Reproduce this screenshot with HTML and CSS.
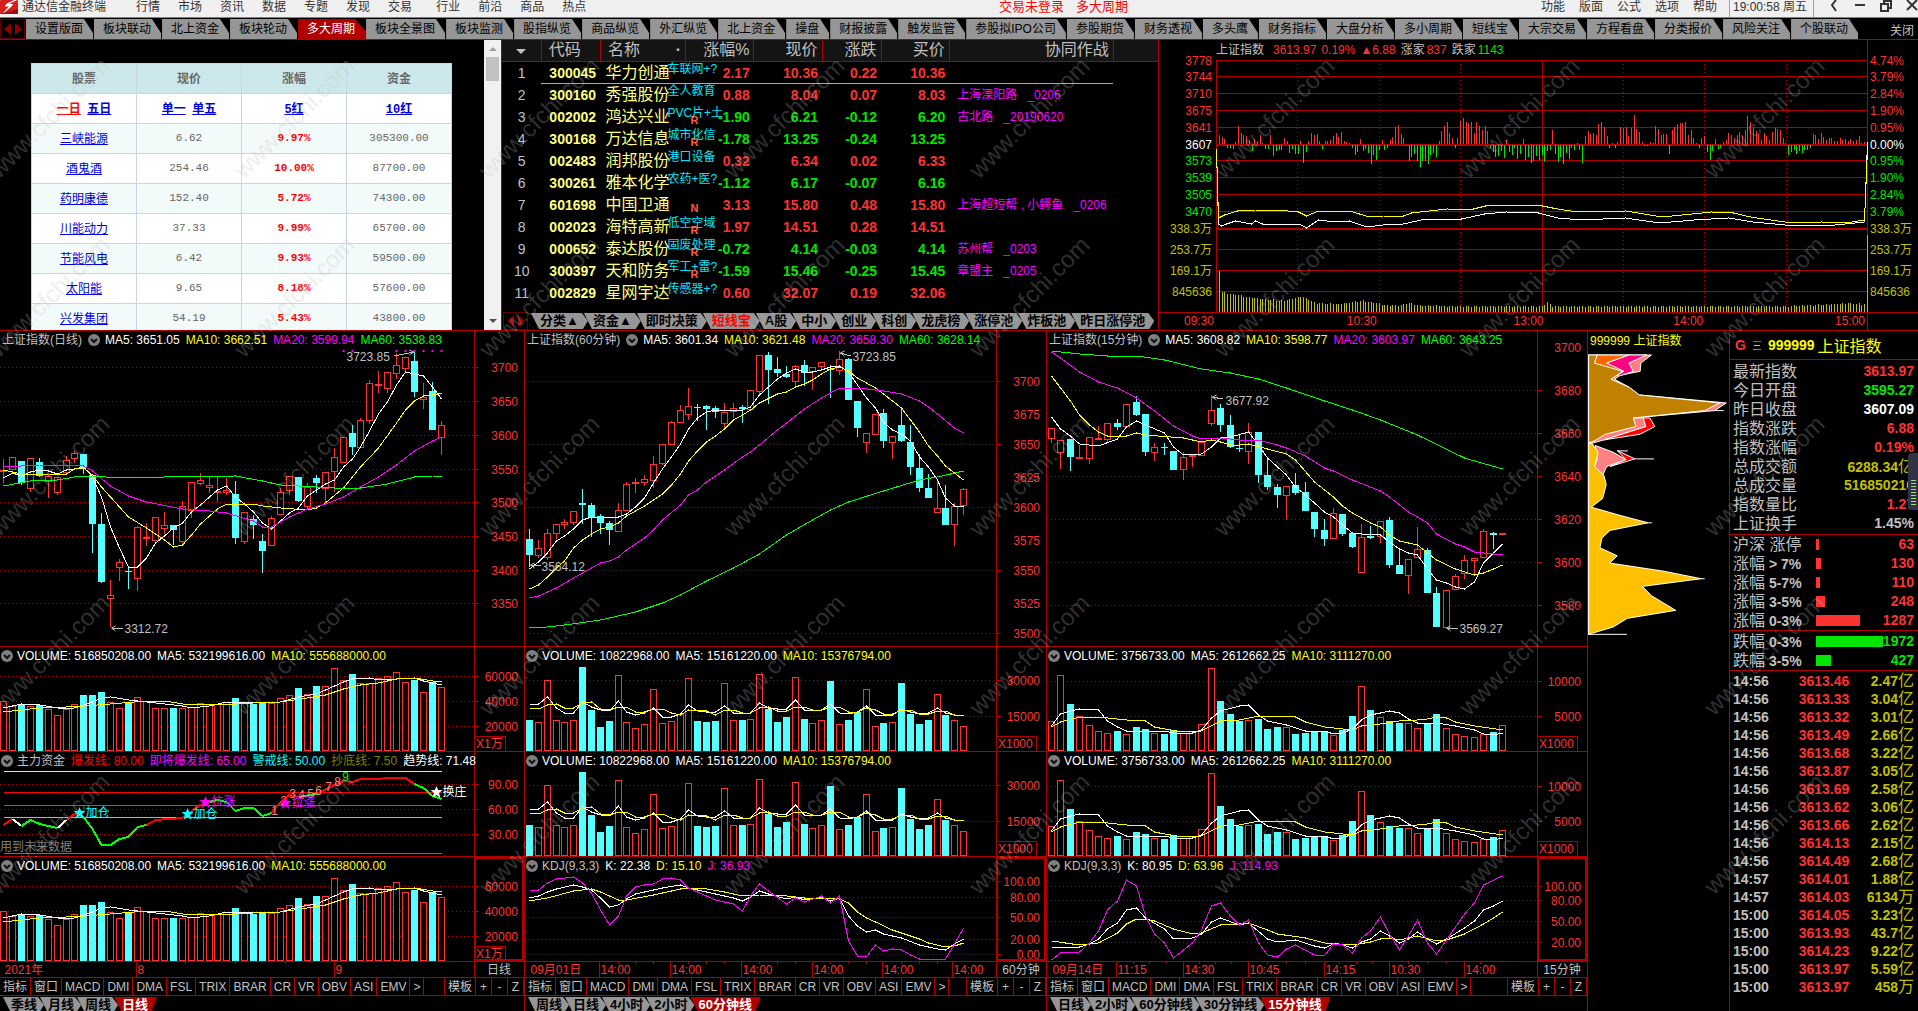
FILE: index.html
```html
<!DOCTYPE html>
<html lang="zh-CN">
<head>
    <meta charset="utf-8">
    <title>通达信金融终端</title>
    <link rel="stylesheet" href="styles.css">
</head>
<body>

<header class="menubar">
    <svg class="logo" viewBox="0 0 18 14"><rect width="18" height="14" rx="1" fill="#d81e1e"/><path d="M14 0L6 4 5 7 9 6 4 12 3 14 12 6 13 4 9 4 17 0Z" fill="#fff"/><path d="M0 14L18 9V14Z" fill="#a00c0c"/></svg>
    <span class="app-name">通达信金融终端</span>
    <nav class="menu" id="menu"></nav>
    <div class="status"><span>交易未登录</span><span>多大周期</span></div>
    <nav class="menu menu-right" id="menuRight"></nav>
    <time class="clock">19:00:58 周五</time>
    <div class="window-buttons">
        <button aria-label="返回"><svg viewBox="0 0 12 12"><path d="M8 0L4 5 8 11"/></svg></button>
        <button aria-label="最小化"><svg viewBox="0 0 12 12"><path d="M1 5H11"/></svg></button>
        <button aria-label="还原"><svg viewBox="0 0 12 12"><path d="M1 4H8V11H1ZM4 4V1H11V8H8"/></svg></button>
        <button aria-label="关闭窗口"><svg viewBox="0 0 12 12"><path d="M1 0L11 10M11 0L1 10"/></svg></button>
    </div>
</header>

<nav class="page-tabs">
    <span class="arrows"><i class="arrow-left"></i><i class="arrow-right"></i></span>
    <div class="tab-list" id="pageTabs"></div>
    <button class="close">关闭</button>
</nav>

<main>
    <div class="top">
        <section class="funds">
            <div class="funds-page">
                <table class="funds-table">
                    <thead><tr><th>股票</th><th>现价</th><th>涨幅</th><th>资金</th></tr></thead>
                    <tbody id="fundsBody">
                        <tr class="links">
                            <td><a href="#" class="current">一日</a> <a href="#">五日</a></td>
                            <td><a href="#">单一</a> <a href="#">单五</a></td>
                            <td><a href="#">5红</a></td>
                            <td><a href="#">10红</a></td>
                        </tr>
                    </tbody>
                </table>
            </div>
            <div class="scrollbar"><i class="up"></i><i class="thumb"></i><i class="down"></i></div>
        </section>

        <section class="stocks">
            <table class="stock-table">
                <colgroup><col class="c-no"><col class="c-code"><col class="c-name"><col class="c-num"><col class="c-num"><col class="c-diff"><col class="c-num"><col class="c-note"><col></colgroup>
                <thead>
                    <tr><th class="no"><i class="down"></i></th><th>代码</th><th>名称<b>·</b></th><th class="num">涨幅%</th><th class="num">现价</th><th class="num">涨跌</th><th class="num">买价</th><th class="num">协同作战</th><th></th></tr>
                </thead>
                <tbody id="stockBody"></tbody>
            </table>
            <nav class="sheet-tabs stock-tabs">
                <span class="arrows"><i class="arrow-left"></i><i class="arrow-right"></i></span>
                <div class="tab-list" id="stockTabs"></div>
            </nav>
        </section>

        <section class="intraday">
            <svg id="intraday"></svg>
            <div class="readout">
                <span class="gray title">上证指数</span><span class="red">3613.97</span><span class="red">0.19%</span><span class="red">▲6.88</span>
                <span class="gray">涨家<em class="red">837</em></span><span class="gray">跌家<em class="green">1143</em></span>
            </div>
        </section>
    </div>

    <div class="bottom">
        <section class="column" id="day"></section>
        <section class="column" id="min60"></section>
        <section class="column" id="min15"></section>

        <section class="profile">
            <h2>999999 上证指数</h2>
            <svg viewBox="0 0 424 850" preserveAspectRatio="none">
                <g stroke="#fff" stroke-width="3" stroke-linejoin="round" transform="translate(-24 -70)">
                    <path fill="#ff8080" d="M24 73H215L183 97 181 122 120 134 104 146 148 170 178 193 440 217 405 240 160 262H190L198 288 72 328 36 338H24Z"/>
                    <path fill="#ff0080" d="M146 73H200L147 97 160 122 118 136 80 97Z"/>
                    <path fill="#f60" d="M50 73H146L80 97 132 122 110 134 43 97Z"/>
                    <path fill="#f00" d="M190 262H210L225 288 180 311 72 328 198 288Z"/>
                    <path fill="#c08000" d="M24 73H52L43 97 128 122 93 146 148 170 178 193 420 217 375 240 160 262 168 288 76 311 45 330 24 338Z"/>
                    <path fill="#ff8080" d="M46 345L100 365 138 387 80 408 68 435 44 408 52 385Z"/>
                    <path fill="#f00" d="M112 360L165 385 90 408 138 387Z"/>
                    <path fill="#ffc000" d="M24 338H36L54 365 50 385 44 408 72 435 79 462 68 504 34 530 118 554 205 577 90 600 66 623 60 652 112 676 90 698 250 722 365 745 188 768 215 796 288 840 142 864 100 890 26 912H24Z"/>
                    <path fill="none" d="M405 240H432M165 385H222M112 361H144M205 577H216M365 745H375M24 912H141M26 73V912"/>
                </g>
            </svg>
        </section>

        <section class="quote">
            <h2><b class="red">G</b><svg viewBox="0 0 8 11"><path d="M0 1H8" stroke="#ff3232"/><path d="M1 5H7" stroke="#c0c0c0"/><path d="M0 9H8" stroke="#00e600"/></svg><b>999999</b><span>上证指数</span></h2>
            <table class="facts" id="facts"></table>
            <table class="spread" id="spreadUp"></table>
            <table class="spread" id="spreadDown"></table>
            <table class="ticks" id="ticks"></table>
            <div class="meter"></div>
        </section>
    </div>
</main>

<div class="watermarks" id="watermarks" aria-hidden="true"></div>

<script src="data.js"></script>
<script src="app.js"></script>
</body>
</html>
```
FILE: styles.css
```css
* {
    box-sizing: border-box;
}

body {
    margin: 0;
    min-height: 100vh;
    background: #000;
    color: #c0c0c0;
    font-family: "Liberation Sans", "Noto Sans CJK SC", sans-serif;
    font-size: 12px;
    overflow: hidden;
}

button {
    border: 0;
    padding: 0;
    background: none;
    color: inherit;
    font: inherit;
    cursor: pointer;
}

a {
    color: inherit;
    text-decoration: none;
}

i, em {
    font-style: normal;
}

h2 {
    margin: 0;
    font-weight: normal;
}

table {
    border-collapse: collapse;
    width: 100%;
}

td, th {
    padding: 0;
    white-space: nowrap;
}

th {
    font-weight: normal;
}

.red { color: #ff3232; }
.green { color: #00e600; }
.gray { color: #c0c0c0; }
.white { color: #fff; }
.yellow { color: #ffff00; }
.magenta { color: #ff00ff; }
.lime { color: #00ff00; }
.cyan { color: #00ffff; }
.fire { color: #ff0000; }
.olive { color: #808000; }
.gold { color: #c0c000; }

/* menu bar */
.menubar {
    display: flex;
    height: 18px;
    overflow: hidden;
    background: #f0f0f0;
    border-bottom: 1px solid #808080;
    color: #333;
    line-height: 14px;
    white-space: nowrap;
}

.logo {
    width: 18px;
    height: 14px;
    flex: none;
}

.app-name {
    margin: 0 30px 0 4px;
}

.menu {
    display: flex;
    gap: 18px;
}

.menu .spaced {
    margin-left: 6px;
}

.status {
    display: flex;
    gap: 12px;
    margin: 0 auto;
    color: #ff0000;
    font-size: 13px;
}

.menu-right {
    gap: 14px;
    margin-right: 12px;
}

.clock {
    width: 85px;
    padding-left: 3px;
    border-left: 1px solid #a0a0a0;
    border-right: 1px solid #a0a0a0;
}

.window-buttons {
    display: flex;
    align-items: flex-start;
    gap: 14px;
    margin-left: 14px;
}

.window-buttons svg {
    display: block;
    width: 12px;
    height: 12px;
    fill: none;
    stroke: #333;
    stroke-width: 2;
}

/* page tabs */
.page-tabs {
    display: flex;
    height: 22px;
    padding-top: 1px;
    border-bottom: 1px solid #b00000;
    background: #000;
    white-space: nowrap;
}

.tab-list {
    display: flex;
}

.arrows {
    display: flex;
    align-items: center;
    justify-content: center;
    gap: 4px;
    width: 25px;
    margin-right: 1px;
    border: 1px solid #600000;
}

.arrow-left, .arrow-right {
    border: 6px solid transparent;
}

.arrow-left {
    border-left: 0;
    border-right: 7px solid #900000;
}

.arrow-right {
    border-right: 0;
    border-left: 7px solid #900000;
}

.page-tabs .tab-list button {
    height: 20px;
    margin-right: 1px;
    padding: 0 10px 0 9px;
    background: #969696;
    color: #000;
    line-height: 19px;
    clip-path: polygon(0 0, calc(100% - 9px) 0, 100% 70%, 100% 100%, 0 100%);
}

.page-tabs .tab-list .active {
    margin-right: -7px;
    padding-right: 18px;
    background: #b00000;
    color: #fff;
    clip-path: polygon(0 0, calc(100% - 18px) 0, 100% 100%, 0 100%);
}

.close {
    margin-left: auto;
    padding-right: 4px;
}

/* upper row */
.top {
    display: grid;
    grid-template-columns: minmax(0, 501fr) minmax(0, 657fr) minmax(0, 760fr);
    height: 290px;
}

.funds {
    display: flex;
    height: 290px;
    overflow: hidden;
}

.funds-page {
    flex: 1;
    padding: 23px 32px 0 31px;
}

.funds-table {
    table-layout: fixed;
    background: #fff;
    color: #666;
    font-family: "Liberation Mono", "Noto Sans CJK SC", monospace;
    font-size: 11px;
    text-align: center;
}

.funds-table th, .funds-table td {
    height: 30px;
    padding-bottom: 2px;
    border: 1px solid #c5d6e8;
}

.funds-table th {
    background: #cde8ea;
    font-weight: bold;
    font-size: 12px;
}

.funds-table tr:nth-child(even) td {
    background: #f3fafa;
}

.funds-table a {
    color: #0000e0;
    font-size: 12px;
    text-decoration: underline;
}

.funds-table .links a {
    font-weight: bold;
}

.funds-table .links .current,
.funds-table .rise {
    color: #ff0000;
    font-weight: bold;
}

.scrollbar {
    display: flex;
    flex-direction: column;
    align-items: center;
    width: 17px;
    padding: 7px 0;
    background: #f1f1f1;
}

.scrollbar .up {
    border: 4px solid transparent;
    border-top: 0;
    border-bottom: 4px solid #a0a0a0;
}

.thumb {
    width: 13px;
    height: 24px;
    margin-top: 6px;
    background: #c1c1c1;
}

.down {
    display: inline-block;
    border: 5px solid transparent;
    border-bottom: 0;
    border-top: 5px solid #c0c0c0;
}

.no .down {
    vertical-align: middle;
}

.scrollbar .down {
    margin-top: auto;
    border-width: 4px 4px 0;
    border-top-color: #505050;
}

/* stock list */
.stocks {
    display: flex;
    flex-direction: column;
    border-left: 1px solid #b00000;
}

.stock-table {
    table-layout: fixed;
    font-size: 14px;
    font-weight: bold;
}

.c-no { width: 6%; }
.c-code { width: 9%; }
.c-name { width: 13%; }
.c-num { width: 10.4%; }
.c-diff { width: 9%; }
.c-note { width: 25%; }

.stock-table th {
    height: 21px;
    padding: 0 4px 0 7px;
    border-right: 1px solid #b00000;
    border-bottom: 1px solid #b00000;
    background: #141414;
    font-size: 16px;
    line-height: 18px;
    text-align: left;
}

.stock-table th:last-child {
    border-right: 0;
}

.stock-table th b {
    float: right;
}

.stock-table td {
    height: 22px;
    padding: 0 4px 0 8px;
    line-height: 22px;
    color: #ffff80;
}

.stock-table .no {
    padding: 0;
    color: #c0c0c0;
    font-weight: normal;
    text-align: center;
}

.stock-table .num {
    text-align: right;
    padding-left: 0;
}

.stock-table td.red { color: #ff3232; }
.stock-table td.green { color: #00e600; }

.stock-table .name {
    position: relative;
    padding-left: 5px;
    font-size: 16px;
    font-weight: normal;
}

.tag {
    position: absolute;
    left: 67px;
    top: 0;
    z-index: 1;
    color: #00e6ff;
    font-size: 12px;
    line-height: 14px;
}

.mark {
    position: absolute;
    left: 90px;
    bottom: 2px;
    color: #ff5a46;
    font-size: 11px;
    font-weight: bold;
    line-height: 12px;
}

.stock-table .note {
    color: #ff00ff;
    font-size: 12px;
    font-weight: normal;
    white-space: pre;
}

.stock-table .picked td:not(:first-child):not(:last-child) {
    box-shadow: inset 0 -1px #c0c000;
}

.sheet-tabs {
    display: flex;
    height: 15px;
    padding: 1px 0 0 3px;
    overflow: hidden;
    white-space: nowrap;
}

.sheet-tabs .tab-list button {
    height: 16px;
    margin-right: -4px;
    padding: 0 7px 0 8px;
    background: #969696;
    color: #000;
    font-size: 13px;
    font-weight: bold;
    line-height: 16px;
    clip-path: polygon(0 0, calc(100% - 6px) 0, 100% 50%, calc(100% - 5px) 100%, 8px 100%);
}

.sheet-tabs .tab-list .active {
    padding-right: 9px;
    background: #b00000;
    color: #fff;
    clip-path: polygon(0 0, 100% 0, calc(100% - 6px) 100%, 8px 100%);
}

.stock-tabs {
    height: 18px;
    margin-top: auto;
    padding: 0 0 0 1px;
}

.stock-tabs .arrows {
    margin-right: 3px;
}

.stock-tabs .tab-list button {
    margin-top: 1px;
    padding: 0 9px;
}

.stock-tabs .tab-list .active {
    background: #969696;
    color: #ff0000;
    clip-path: polygon(0 0, calc(100% - 6px) 0, 100% 50%, calc(100% - 5px) 100%, 8px 100%);
}

/* drawings with a readout on top */
.intraday, .panel {
    display: grid;
}

.intraday > *, .panel > * {
    grid-area: 1 / 1;
    min-width: 0;
}

.intraday svg, .panel svg.plot {
    display: block;
    width: 100%;
    height: 100%;
}

.intraday {
    border-left: 1px solid #b00000;
}

.readout {
    display: flex;
    align-self: start;
    gap: 6px;
    height: 18px;
    padding-left: 2px;
    line-height: 18px;
    white-space: nowrap;
    align-items: center;
    z-index: 1;
}

.intraday .readout {
    padding: 2px 0 0 57px;
    gap: 5px;
}

.readout .title {
    margin-right: 4px;
}

.readout em {
    margin-left: 2px;
}

.toggle {
    width: 12px;
    height: 12px;
    flex: none;
    margin-right: -1px;
    border-radius: 50%;
    background: #808080;
}

.toggle svg {
    display: block;
    width: 12px;
    height: 12px;
    fill: none;
    stroke: #111;
    stroke-width: 2;
}

.toggle:first-child {
    margin: 0 -2px 0 -1px;
}

svg text {
    font-family: "Liberation Sans", "Noto Sans CJK SC", sans-serif;
    font-size: 12px;
}

/* lower row */
.bottom {
    display: grid;
    grid-template-columns: minmax(0, 524fr) minmax(0, 522fr) minmax(0, 541fr) minmax(0, 142fr) minmax(0, 189fr);
    border-top: 1px solid #b00000;
}

.bottom > section + section {
    border-left: 1px solid #b00000;
}

.panel {
    border-bottom: 1px solid #b00000;
    height: 105px;
}

.panel.price {
    height: 316px;
}

.panel.times {
    height: 16px;
}

.indicators {
    display: flex;
    height: 18px;
    border-bottom: 1px solid #b00000;
}

.indicators button {
    padding: 0 3px;
    border-right: 1px solid #b00000;
    line-height: 16px;
}

.indicators .rest {
    flex: 1;
    border-right: 1px solid #b00000;
}

.indicators .key {
    width: 16px;
}

/* volume profile */
.profile h2 {
    padding-left: 2px;
    color: #ffff00;
    font-size: 12px;
    line-height: 20px;
    height: 23px;
    white-space: nowrap;
}

.profile svg {
    display: block;
    width: 100%;
    height: 283px;
    shape-rendering: crispEdges;
}

/* quote column */
.quote {
    position: relative;
    font-size: 14px;
    font-weight: bold;
}

.quote h2 {
    display: flex;
    align-items: center;
    gap: 7px;
    height: 28px;
    padding-left: 5px;
    color: #ffff00;
    font-size: 14px;
    white-space: nowrap;
}

.quote h2 svg {
    width: 8px;
    height: 11px;
    stroke-width: 1;
    shape-rendering: crispEdges;
}

.quote h2 span {
    margin-left: -4px;
    font-size: 16px;
}

.quote table {
    border-top: 1px solid #b00000;
    border-collapse: separate;
    border-spacing: 0;
}

.quote td {
    height: 19px;
    padding: 0 4px 0 0;
    line-height: 17px;
    text-align: right;
}

.quote td:first-child {
    padding-left: 3px;
    text-align: left;
}

.quote em {
    font-size: 16px;
    font-weight: normal;
}

.quote .facts {
    padding: 2px 0 1px;
}

.spread td:first-child {
    width: 86px;
}

.quote .spread .bar {
    padding: 0;
    width: 44px;
    text-align: left;
}

.bar i {
    display: block;
    height: 11px;
    background: #ff3232;
}

#spreadDown .bar i {
    background: #00e600;
}

.quote #spreadDown, .quote .ticks {
    padding-top: 1px;
}

.quote .ticks td {
    height: 18px;
    line-height: 17px;
}

.meter {
    position: absolute;
    right: 0;
    top: 122px;
    width: 10px;
    height: 57px;
    border-radius: 4px 0 0 4px;
    background: repeating-linear-gradient(#96e678 0 1px, transparent 1px 3px) 3px 27px / 5px 26px no-repeat, #303446;
}

/* page watermark */
.watermarks {
    position: absolute;
    inset: 28px 0 0 -73px;
    display: grid;
    grid-template-columns: repeat(8, 245px);
    grid-auto-rows: 179px;
    overflow: hidden;
    pointer-events: none;
}

.watermarks span {
    place-self: center;
    color: rgba(190, 190, 190, 0.27);
    font-size: 24px;
    transform: rotate(-45deg);
}
```
FILE: data.js
```js
const menu = ['行情', '市场', '资讯', '数据', '专题', '发现', '交易', '行业', '前沿', '商品', '热点'];
const menuRight = ['功能', '版面', '公式', '选项', '帮助'];
const pageTabs = ['设置版面', '板块联动', '北上资金', '板块轮动', '多大周期', '板块全景图', '板块监测', '股指纵览', '商品纵览', '外汇纵览', '北上资金', '操盘', '财报披露', '触发监管', '参股拟IPO公司', '参股期货', '财务透视', '多头鹰', '财务指标', '大盘分析', '多小周期', '短线宝', '大宗交易', '方程看盘', '分类报价', '风险关注', '个股联动'];
const stockTabs = ['分类▲', '资金▲', '即时决策', '短线宝', 'A股', '中小', '创业', '科创', '龙虎榜', '涨停池', '炸板池', '昨日涨停池'];

const funds = [
    ['三峡能源', '6.62', '9.97%', '305300.00'],
    ['酒鬼酒', '254.46', '10.00%', '87700.00'],
    ['药明康德', '152.40', '5.72%', '74300.00'],
    ['川能动力', '37.33', '9.99%', '65700.00'],
    ['节能风电', '6.42', '9.93%', '59500.00'],
    ['太阳能', '9.65', '8.18%', '57600.00'],
    ['兴发集团', '54.19', '5.43%', '43800.00']
];

// code, name, theme, mark, change %, price, change, bid, note
const stocks = [
    ['300045', '华力创通', '车联网+?', '', '2.17', '10.36', '0.22', '10.36', ''],
    ['300160', '秀强股份', '全人教育', '', '0.88', '8.04', '0.07', '8.03', '上海溧阳路   _0206'],
    ['002002', '鸿达兴业', 'PVC片+土', 'R', '-1.90', '6.21', '-0.12', '6.20', '古北路   _20190620'],
    ['300168', '万达信息', '城市化信', 'R', '-1.78', '13.25', '-0.24', '13.25', ''],
    ['002483', '润邦股份', '港口设备', '', '0.32', '6.34', '0.02', '6.33', ''],
    ['300261', '雅本化学', '农药+医?', '', '-1.12', '6.17', '-0.07', '6.16', ''],
    ['601698', '中国卫通', '', 'N', '3.13', '15.80', '0.48', '15.80', '上海超短帮 , 小鳄鱼   _0206'],
    ['002023', '海特高新', '低空空域', 'R', '1.97', '14.51', '0.28', '14.51', ''],
    ['000652', '泰达股份', '固废处理', 'R', '-0.72', '4.14', '-0.03', '4.14', '苏州帮   _0203'],
    ['300397', '天和防务', '军工+雷?', 'R', '-1.59', '15.46', '-0.25', '15.45', '章盟主   _0205'],
    ['002829', '星网宇达', '传感器+?', '', '0.60', '32.07', '0.19', '32.06', '']
];

const facts = [
    ['最新指数', '3613.97', 'red'], ['今日开盘', '3595.27', 'green'], ['昨日收盘', '3607.09', 'white'],
    ['指数涨跌', '6.88', 'red'], ['指数涨幅', '0.19%', 'red'], ['总成交额', '6288.34<em>亿</em>', 'gold'],
    ['总成交量', '516850210', 'gold'], ['指数量比', '1.27', 'red'], ['上证换手', '1.45%', 'gray']
];
const spreadUp = [['<em>沪深 涨停</em>', 3, '63'], ['<em>涨幅</em> > 7%', 5, '130'], ['<em>涨幅</em> 5-7%', 4, '110'], ['<em>涨幅</em> 3-5%', 9, '248'], ['<em>涨幅</em> 0-3%', 44, '1287']];
const spreadDown = [['<em>跌幅</em> 0-3%', 67, '1972'], ['<em>跌幅</em> 3-5%', 15, '427']];
const ticks = [
    ['14:56', '3613.46', '2.47亿'], ['14:56', '3613.33', '3.04亿'], ['14:56', '3613.32', '3.01亿'],
    ['14:56', '3613.49', '2.66亿'], ['14:56', '3613.68', '3.22亿'], ['14:56', '3613.87', '3.05亿'],
    ['14:56', '3613.69', '2.58亿'], ['14:56', '3613.62', '3.06亿'], ['14:56', '3613.66', '2.62亿'],
    ['14:56', '3614.13', '2.15亿'], ['14:56', '3614.49', '2.68亿'], ['14:57', '3614.01', '1.88亿'],
    ['14:57', '3614.03', '6134万'], ['15:00', '3614.05', '3.23亿'], ['15:00', '3613.93', '43.7亿'],
    ['15:00', '3614.23', '9.22亿'], ['15:00', '3613.97', '5.59亿'], ['15:00', '3613.97', '458万']
];

// Chart heights are kept in thirds of a pixel, counted down from the top of the pane group.
// candle: u/d, high, body top, body bottom, low     line: bar index:height
const columns = [
    {
        id: 'day', name: '上证指数(日线)', period: '日线', plot: 474, start: 3, step: 8.937,
        ma: ['3651.05', '3662.51', '3599.94', '3538.83'],
        grid: { 3700: 112, 3650: 214, 3600: 316, 3550: 416, 3500: 517, 3450: 619, 3400: 721, 3350: 820 },
        candles: 'u388,421,427,460 u382,382,421,421 d393,393,460,465 u385,385,478,485 d384,396,437,440 u430,439,455,503 u442,442,488,496 u378,391,430,430 u364,368,388,398 d372,372,414,432 d436,436,581,668 d548,581,755,758 u750,796,808,892 u687,697,713,753 d712,723,725,776 u588,590,748,782 u580,622,626,648 u562,562,634,634 u546,586,596,612 d585,585,600,645 u514,529,635,638 u457,457,542,563 u430,451,463,466 u440,466,473,488 u442,483,487,516 u445,481,488,494 d453,492,624,642 u547,547,635,641 d556,567,584,627 d612,633,662,728 u559,565,647,647 u474,487,554,554 u437,437,482,494 d441,441,513,516 u460,472,530,538 d435,445,459,489 u427,427,478,524 u354,382,427,486 u322,322,398,398 d286,309,350,375 u265,271,355,355 u150,160,272,281 u124,162,166,188 u127,127,178,188 u68,106,131,146 u82,82,117,124 d62,94,185,201 u160,202,211,236 d156,183,300,300 u274,286,325,375',
        lines: [
            ['#fff', '0:443 1:430 2:438 3:427 4:419 5:422 6:432 7:421 8:416 9:412 10:440 11:502 12:590 13:655 14:711 15:711 16:684 17:640 18:618 19:594 20:579 21:545 22:525 23:502 24:479 25:469 26:502 27:521 28:545 29:580 30:598 31:572 32:548 33:534 34:497 35:479 36:463 37:451 38:412 39:388 40:352 41:302 42:252 43:215 44:166 45:127 46:133 47:139 48:172 49:208'],
            ['#ff0', '0:419 2:432 3:436 5:433 7:431 8:417 9:415 10:435 11:472 14:562 16:594 18:630 19:651 20:646 21:615 22:582 24:536 25:523 28:523 29:529 31:535 34:539 35:534 36:520 38:475 40:412 42:353 44:280 45:240 46:213 47:197 48:196 49:188'],
            ['#f0f', '0:412 4:404 6:404 8:404 9:408 10:424 12:468 14:497 16:515 20:537 23:544 25:550 28:574 29:590 30:592 32:560 34:538 36:523 38:500 40:472 42:440 44:405 46:363 48:333 49:320'],
            ['#0f0', '0:468 3:453 6:449 8:442 10:438 13:445 18:442 26:438 29:453 31:464 35:472 37:475 40:475 43:463 46:442 48:438 49:438']
        ],
        notes: [['3723.85', 38.4, 80, 43.7, 77, 45.9, 66], ['3312.72', 13.5, 898, 13.3, 895, 12.1, 895]],
        dots: [38, 39, 44, 45, 46, 47, 48, 49],
        volume: ['516850208.00', '532199616.00', '555688000.00'], unit: 'X1万', panes: ['volume', 'funds', 'volume'],
        volGrid: { 60000: 103, 40000: 178, 20000: 253 },
        bars: 'u178 u193 d190 u193 d190 u202 u220 u203 u187 d162 d162 d153 u181 u199 d183 u166 u179 u199 u199 d201 u199 u196 u184 u187 u187 u181 d171 u184 d187 d182 u184 u169 u160 d141 u157 d135 u133 u79 u115 d99 u124 u124 u110 u103 u91 u121 d117 u151 d123 u136',
        volLines: [
            ['#fff', '0:200 1:193 2:188 4:190 6:199 7:203 8:200 9:190 10:183 11:171 12:168 14:177 16:181 18:187 20:195 21:200 23:193 25:183 27:181 29:184 31:181 33:166 35:157 37:135 38:122 39:113 41:110 42:115 44:112 46:109 47:118 49:130'],
            ['#ff0', '0:212 4:201 7:196 9:193 12:187 16:180 18:178 20:187 24:191 28:186 31:183 34:171 36:160 38:142 40:132 42:124 44:113 46:109 48:118 49:123']
        ],
        times: [[0, '2021年'], [14.9, '8'], [37, '9']], timeTicks: [20.4, 26, 31.5],
        tabs: ['季线', '月线', '周线', '日线']
    },
    {
        id: 'min60', name: '上证指数(60分钟)', period: '60分钟', plot: 471, start: 4, step: 8.859,
        ma: ['3601.34', '3621.48', '3658.30', '3628.14'],
        grid: { 3700: 154, 3650: 343, 3600: 532, 3550: 721, 3500: 910 }, between: { 3675: 253, 3625: 441, 3575: 631, 3525: 820 },
        candles: 'd597,627,675,712 u630,655,677,684 u598,610,683,690 u583,583,611,627 u567,576,584,597 u544,544,578,585 d477,519,524,582 d520,525,561,620 d553,558,578,611 d573,579,600,645 u519,541,607,607 u457,463,543,543 u444,456,460,489 u435,448,458,467 u378,403,452,473 u343,343,401,405 u274,277,344,344 u225,241,278,278 u174,229,254,269 d222,231,233,272 d225,227,237,300 d229,235,246,264 u219,247,281,293 u219,235,247,263 d225,231,236,279 u181,181,239,239 u75,75,187,198 d66,75,119,222 d82,117,129,140 d108,132,141,144 u105,109,157,172 d90,105,128,168 u112,112,127,180 u97,97,112,123 d105,118,121,204 u62,88,124,135 d84,87,209,209 d213,213,293,320 u310,310,338,369 u253,253,314,316 d238,249,332,354 u319,319,338,387 d235,285,333,336 d285,336,411,435 d373,414,474,486 d432,474,504,504 u450,535,550,550 d465,534,585,585 u519,527,586,647 u474,478,527,555',
        lines: [
            ['#fff', '0:716 1:696 2:668 3:632 4:618 5:596 6:570 7:560 9:562 10:562 11:552 12:530 13:503 14:460 15:418 16:382 17:342 18:298 19:265 20:245 21:239 23:241 24:240 25:232 26:195 27:170 28:148 29:130 30:117 31:127 32:125 33:119 34:112 35:109 36:125 37:165 38:203 39:235 40:275 41:300 42:311 43:333 44:380 45:412 46:450 47:503 48:527 49:527'],
            ['#ff0', '0:778 1:765 2:742 3:715 4:692 5:655 6:630 7:612 8:598 9:592 10:580 11:558 13:528 15:492 16:465 17:432 18:393 19:362 20:335 21:317 22:297 23:270 24:254 25:240 26:220 28:193 29:185 30:172 31:162 32:150 33:133 34:118 35:112 36:124 37:144 38:160 39:175 40:193 41:212 42:235 43:270 44:305 45:348 46:378 47:407 48:428 49:449'],
            ['#f0f', '0:804 1:798 3:774 5:743 7:715 8:700 9:692 10:680 11:660 13:625 14:600 15:570 17:525 18:495 19:480 20:456 22:420 24:382 25:365 26:345 28:300 30:258 31:238 33:205 34:188 35:174 36:173 38:177 40:183 42:192 44:212 45:230 46:252 48:295 49:308'],
            ['#0f0', '0:895 2:891 4:884 8:870 12:845 15:820 17:795 20:752 23:715 26:672 29:616 32:570 34:540 36:517 40:482 44:450 46:440 49:424']
        ],
        notes: [['3723.85', 36.5, 80, 36.2, 77, 35.1, 68], ['3564.12', 1.4, 710, 1.2, 706, 0.1, 706]],
        volume: ['10822968.00', '15161220.00', '15376794.00'], unit: 'X1000', panes: ['volume', 'volume', 'kdj'],
        volGrid: { 30000: 115, 15000: 223 },
        bars: 'd237 u241 u115 u235 u241 u235 d78 d207 d258 d240 u100 u241 u259 u247 u142 u244 u238 u219 u109 d240 d243 d240 u124 u235 d237 u232 u97 d204 d243 d228 u106 d234 u244 u235 d120 u247 d237 d213 u142 u253 d246 u241 d126 d219 d249 d237 u157 d222 u235 u253',
        volLines: [
            ['#fff', '0:187 1:187 2:166 3:200 4:214 5:214 6:182 7:198 8:206 9:208 10:180 11:212 12:220 13:216 14:200 15:226 16:226 17:218 18:190 19:210 20:211 21:211 22:194 23:216 24:216 25:215 26:185 27:200 28:202 29:202 30:176 31:205 32:210 33:206 34:188 35:216 36:217 37:211 38:194 39:220 41:220 42:203 43:213 44:217 45:214 46:200 47:214 48:220 49:220'],
            ['#ff0', '0:199 1:202 2:190 3:188 4:199 5:199 6:184 7:181 8:204 9:207 10:196 11:197 12:211 13:211 14:202 15:202 16:215 17:220 18:205 20:208 21:220 22:206 23:205 24:216 25:215 26:199 27:197 28:208 29:208 30:196 31:196 32:206 33:206 34:196 35:198 36:212 37:212 38:201 39:206 40:217 41:217 42:207 43:207 44:217 45:217 46:208 47:209 48:220 49:220']
        ],
        kdj: ['22.38', '15.10', '36.93'],
        kdjGrid: { '100.00': 721, '80.00': 767, '50.00': 829, '20.00': 895, '0.00': 940 },
        kdjLines: [
            ['#fff', '0:770 1:765 2:754 3:745 5:733 6:739 7:748 8:770 9:797 10:792 11:773 12:760 13:752 15:740 17:733 18:741 19:747 21:760 23:770 24:781 25:767 26:751 27:758 29:775 30:769 31:777 33:769 34:779 35:770 36:825 37:855 38:872 39:866 40:880 42:892 44:913 46:924 47:928 48:910 49:895'],
            ['#ff0', '0:781 2:770 5:749 7:744 8:752 10:777 11:776 14:762 17:743 18:741 20:743 22:753 24:766 26:763 28:763 31:770 34:771 35:773 36:787 37:812 38:832 39:842 41:867 44:893 45:905 47:917 48:916 49:907'],
            ['#f0f', '0:747 1:747 2:727 3:713 5:707 6:727 7:757 8:808 9:853 10:826 11:766 12:739 13:731 14:730 15:715 16:712 17:716 18:740 19:752 21:777 23:790 24:810 25:766 26:730 27:750 29:790 30:772 31:784 33:765 34:787 35:766 36:900 37:945 38:949 39:911 40:931 41:925 42:926 43:943 44:955 47:954 48:910 49:862']
        ],
        times: [[0, '09月01日'], [7.9, '14:00'], [15.9, '14:00'], [23.9, '14:00'], [31.9, '14:00'], [39.9, '14:00'], [47.8, '14:00']], timeTicks: [10, 12, 14, 18, 20, 22, 26, 28, 30, 34, 36, 38, 42, 44, 46],
        tabs: ['周线', '日线', '4小时', '2小时', '60分钟线']
    },
    {
        id: 'min15', name: '上证指数(15分钟)', period: '15分钟', plot: 490, start: 4, step: 9.397,
        ma: ['3608.82', '3598.77', '3603.97', '3643.25'],
        grid: { 3680: 181, 3660: 310, 3640: 439, 3620: 568, 3600: 697, 3580: 826 }, between: { 3700: 52 },
        candles: 'u295,295,326,338 u331,331,368,416 d328,328,380,422 u345,381,386,388 u322,322,386,401 u289,324,326,329 u280,280,331,335 d268,279,291,299 u223,223,292,292 d199,216,254,257 d252,252,366,377 u340,352,368,392 d340,351,355,374 d363,363,420,420 u366,382,419,449 u374,374,382,410 u335,335,377,377 u195,241,281,287 d222,234,285,305 d255,285,350,353 d315,353,356,365 u280,307,365,402 d307,307,435,458 d385,435,471,479 d462,471,495,533 u469,469,499,569 d429,465,489,494 d456,486,543,543 d546,546,597,620 d567,600,627,647 u535,550,628,628 d552,552,612,617 d609,609,650,653 u582,622,730,730 d588,618,623,627 u574,574,622,638 d561,570,705,713 d653,705,732,732 u688,688,737,791 u591,656,685,685 d655,660,788,788 d771,789,890,890 u781,781,895,895 u733,737,781,781 u676,691,733,746 u685,685,692,737 u598,604,685,685 d606,609,614,656 u608,608,616,616',
        lines: [
            ['#fff', '0:262 1:298 2:317 3:343 5:349 7:326 8:290 9:274 10:284 12:308 13:350 14:376 16:373 17:350 18:324 19:320 21:307 22:345 23:384 25:436 26:470 27:495 28:520 29:546 30:562 31:586 32:609 33:613 35:614 36:637 37:656 38:669 39:674 40:717 41:750 42:760 43:770 44:777 45:755 46:700 47:670 48:643'],
            ['#ff0', '0:139 1:175 2:212 3:255 4:285 5:305 6:318 8:317 9:310 10:314 14:324 16:337 17:331 18:337 19:345 20:346 21:341 23:356 25:372 26:390 28:457 29:480 30:500 31:528 32:550 34:578 35:590 36:614 37:633 39:644 40:668 41:690 43:716 45:736 46:730 47:716 48:706'],
            ['#f0f', '0:67 1:85 3:127 5:156 7:175 9:204 11:243 13:287 15:318 16:328 18:325 20:331 22:330 24:345 25:353 27:378 29:413 30:422 32:450 35:482 36:500 38:546 39:560 40:580 41:612 43:641 44:652 45:665 47:673 48:673'],
            ['#0f0', '0:64 2:68 3:73 6:77 9:79 12:91 16:118 19:130 22:148 25:175 29:212 32:240 35:270 39:314 44:383 48:418']
        ],
        notes: [['3677.92', 18.5, 212, 18.2, 208, 17.1, 200], ['3569.27', 43.4, 898, 43.2, 895, 42, 895]],
        volume: ['3756733.00', '2612662.25', '3111270.00'], unit: 'X1000', panes: ['volume', 'volume', 'kdj'],
        volGrid: { 10000: 118, 5000: 223 },
        bars: 'u238 u100 d189 u223 u250 u268 u274 d270 u277 d258 d264 u274 d279 d267 u274 u268 u247 u79 d180 d219 d240 u235 d234 d264 d258 u256 d279 d276 d273 d270 u280 d267 d225 u133 d207 u226 d240 d246 u244 u259 d246 d219 u259 u277 u283 u286 u277 d273 u250',
        volLines: [
            ['#fff', '0:253 1:218 2:208 3:202 5:206 6:240 7:256 8:268 10:270 12:270 13:274 15:274 16:266 17:230 18:208 20:194 21:190 22:220 23:238 25:250 27:268 29:270 30:278 31:275 32:264 33:236 34:222 35:214 36:208 37:214 38:234 39:245 41:245 43:254 45:267 46:279 47:281 48:275'],
            ['#ff0', '0:257 1:242 3:228 4:227 6:230 8:235 10:239 11:256 12:264 14:272 16:268 18:240 20:235 22:225 24:223 26:227 27:242 29:258 31:264 32:266 33:254 35:247 37:238 39:235 40:233 41:227 42:229 43:243 45:254 48:265']
        ],
        kdj: ['80.95', '63.96', '114.93'],
        kdjGrid: { '100.00': 736, '80.00': 778, '50.00': 841, '20.00': 904 },
        kdjLines: [
            ['#fff', '0:918 3:919 4:909 5:895 6:865 7:845 8:808 9:802 10:830 12:863 13:895 15:890 16:878 17:842 18:832 20:852 21:845 23:895 24:903 26:898 28:915 29:922 30:910 31:911 32:922 33:904 34:895 35:871 36:885 37:907 38:893 39:872 40:895 41:910 42:895 44:860 45:840 46:808 47:794 48:780'],
            ['#ff0', '0:901 3:913 4:910 5:906 7:877 8:850 9:835 10:835 11:840 13:865 15:880 16:877 18:853 20:850 21:847 23:868 24:880 27:892 29:907 32:913 34:904 35:895 36:892 37:898 39:886 41:899 42:897 44:880 46:850 47:830 48:814'],
            ['#f0f', '0:958 1:937 3:934 4:907 5:870 6:808 7:780 8:718 9:736 10:825 11:880 12:905 13:952 15:905 16:868 17:795 18:787 19:825 20:852 21:836 22:905 23:943 24:949 25:925 26:913 28:943 29:946 30:909 31:911 32:937 33:892 34:871 35:829 36:880 37:928 38:885 39:838 40:905 41:940 42:897 44:820 45:787 46:733 48:706']
        ],
        times: [[0, '09月14日'], [6.95, '11:15'], [14, '14:30'], [21, '10:45'], [29, '14:15'], [36, '10:30'], [44, '14:00']], timeTicks: [8.7, 10.4, 12.2, 15.7, 17.5, 19.2, 23, 25, 27, 30.7, 32.5, 34.2, 38, 40, 42, 45.7],
        tabs: ['日线', '2小时', '60分钟线', '30分钟线', '15分钟线']
    }
];

// main-force trend: colour, points
const trend = [
    ['#f00', '0:556 1:537'], ['#fff', '1:537 2:558'], ['#0f0', '2:558 3:541 4:553 6:564'], ['#fff', '6:564 7:540'],
    ['#f00', '7:540 8:522 8.5:518'], ['#0f0', '8.5:518 9:530 10:567 11:614 12:614 13:597 14:592 15:562 16:556'],
    ['#f00', '16:556 17:540 20:533 21:514 22:494 23:485'], ['#0f0', '23:485 24:481 25:485 26:513 27:505 28:505 29:527 30:520'],
    ['#f00', '30:520 31:487 32:466 33:470'], ['#0f0', '33:470 35:462'],
    ['#f00', '35:462 37:436 38:424 39:426 40:417 45:414 46:432'], ['#0f0', '46:432 47:443 48:468 49:477']
];
const trendMarks = [[8.5, 520, '加仓', '#0ff'], [20.6, 522, '加仓', '#0ff'], [22.6, 487, '拉涨', '#f0f'], [31.5, 490, '拉涨', '#f0f'], [48.5, 457, '换庄', '#fff']];
const trendCount = [[30.3, 512], [31.3, 484], [32.3, 461], [33.3, 466], [34.3, 461], [35.3, 452], [36.4, 441], [37.4, 427], [38.3, 412]];

const breadth = [9, 7, 5, -3, -3, -4, 2, 18, 11, 9, 8, 4, -6, 5, 3, 9, 1, -4, -4, 9, -11, -6, -5, -5, 6, 3, -8, -4, -9, -9, 3, -18, -7, 3, 11, 9, 10, 3, -4, 3, 3, 4, 8, 11, 7, 12, 3, 2, 1, -3, -10, -7, 5, -6, -4, -8, -19, -10, -15, -5, 4, -5, -3, 4, 7, 17, 19, 10, 6, -1, -16, -12, -9, -16, -22, -16, -16, -19, -10, -8, -12, 3, 13, 18, 22, 11, 6, -3, 6, 23, 26, 22, 21, 22, 11, 22, 18, 14, 18, 13, -3, -7, -12, -11, -6, -13, 4, -7, -10, -3, -14, -9, 5, -15, -12, -18, -16, -11, -15, -10, -17, -6, -5, 14, -9, -17, -12, -19, -8, -14, -3, -5, 1, -5, -18, 8, 13, 10, 11, 9, 20, 22, 17, 8, -3, 1, -3, 2, 17, 16, 17, 8, 16, 29, 15, 12, 2, -1, -1, 2, 1, 18, 15, 9, 10, 10, -9, 14, 17, 20, 21, 21, 22, 9, 14, 6, 1, -3, 6, 8, -7, -15, -6, 5, -4, -3, 2, 4, 11, 9, 6, 9, 12, 8, 14, 28, 22, 17, 13, 10, 4, 11, 8, 4, 12, 16, 15, 14, 6, 1, -10, -7, -5, -9, -6, -8, -5, -5, -3, 10, 9, 5, 11, 7, 4, 6, 6, 3, 3, 6, 4, 5, 3, 5, 3, 4, 8, 1, 2];
// x in thousandths of the session, y in pixels
const leadLine = '0:109 3:178 12:175 32:171 60:170 92:170 126:172 138:176 156:171 205:171 235:177 257:176 287:176 299:173 355:169 389:170 419:165 445:165 501:166 524:169 554:172 629:171 685:177 760:172 794:173 820:177 884:183 929:182 966:183 995:180 1000:109';
const indexLine = '0:109 3:184 8:186 15:184 29:181 53:184 60:181 70:184 96:184 128:184 138:188 156:180 182:182 205:181 231:187 257:185 287:184 321:179 377:179 411:174 445:172 494:173 524:178 561:180 629:178 681:183 734:180 786:178 824:182 857:184 888:186 951:185 995:182 1000:102';
```
FILE: app.js
```js
const RED = '#b00000';
const UP = '#ff3232';
const DOWN = '#54ffff';
const AXIS = 50;

const $ = id => document.getElementById(id);
const tabButtons = (names, active) => names.map(n => `<button${n === active ? ' class="active"' : ''}>${n}</button>`).join('');

// svg helpers
const line = (x1, y1, x2, y2, color, extra = '') => `<path d="M${x1} ${y1}L${x2} ${y2}" fill="none" stroke="${color}" shape-rendering="crispEdges" ${extra}/>`;
const box = (x, y, w, h, color, filled) => filled
    ? `<rect x="${x}" y="${y}" width="${w}" height="${h}" fill="${color}"/>`
    : `<rect x="${x + 0.5}" y="${y + 0.5}" width="${w - 1}" height="${Math.max(h - 1, 1)}" fill="#000" stroke="${color}"/>`;
const label = (x, y, text, color, anchor = 'start') => `<text x="${x}" y="${y + 4}" fill="${color}" text-anchor="${anchor}">${text}</text>`;
const dotted = 'stroke-dasharray="1 3"';

function polyline(points, color, fx, fy, width = 1) {
    const d = points.split(' ').map(p => p.split(':').map(Number)).map(([x, y]) => `${fx(x)},${fy(y)}`).join(' ');
    return `<polyline points="${d}" fill="none" stroke="${color}" stroke-width="${width}" shape-rendering="crispEdges"/>`;
}

function toggle() {
    return '<button class="toggle" aria-label="展开"><svg viewBox="0 0 12 12"><path d="M3 5L6 8 9 5"/></svg></button>';
}

function axis(w, h, grid, fy, withLines = true) {
    let out = '';
    for (const [text, v] of Object.entries(grid)) {
        const y = Math.round(fy(v)) + 0.5;
        if (withLines) out += line(0, y, w - AXIS, y, RED, dotted);
        out += line(w - AXIS, y, w - AXIS + (withLines ? 5 : 2), y, RED);
        out += label(w - 6, y, text, UP, 'end');
    }
    return out + line(w - AXIS + 0.5, 0, w - AXIS + 0.5, h, RED);
}

function scaleX(c, w) {
    const k = (w - AXIS) / c.plot;
    return i => Math.round((c.start + i * c.step) * k) + 0.5;
}

function drawPrice(c, w, h) {
    const fx = scaleX(c, w);
    const fy = v => Math.round(v / 3) - 1;
    let out = axis(w, h, c.grid, fy);
    if (c.between) out += axis(w, h, c.between, fy, false);
    c.candles.split(' ').forEach((s, i) => {
        const [hi, top, bottom, lo] = s.slice(1).split(',').map(Number).map(fy);
        const color = s[0] === 'u' ? UP : DOWN;
        out += line(fx(i), hi, fx(i), lo, color);
        out += box(fx(i) - 3.5, top, 7, Math.max(bottom - top, 1), color, s[0] === 'd');
    });
    c.lines.forEach(([color, pts]) => out += polyline(pts, color, fx, fy));
    (c.dots || []).forEach(i => out += box(fx(i) - 1, 19, 2, 2, '#ff00ff', true));
    c.notes.forEach(([text, i, y, x1, y1, x2, y2]) => {
        out += line(fx(x1), fy(y1), fx(x2), fy(y2), '#c0c0c0');
        const d = x2 > x1 ? -4 : 4;
        out += `<path d="M${fx(x2) + d} ${fy(y2) - 2}L${fx(x2)} ${fy(y2)} ${fx(x2) + d} ${fy(y2) + 3}" fill="none" stroke="#c0c0c0"/>`;
        out += label(fx(i), fy(y), text, '#c0c0c0');
    });
    return out;
}

function drawVolume(c, w, h, last) {
    const fx = scaleX(c, w);
    const base = h;
    const fy = v => Math.round(base - (329 - v) / 3);
    let out = axis(w, h, c.volGrid, fy);
    c.bars.split(' ').forEach((s, i) => {
        const y = fy(Number(s.slice(1)));
        out += box(fx(i) - 3.5, y, 7, base - y, s[0] === 'u' ? UP : DOWN, s[0] === 'd');
    });
    c.volLines.forEach(([color, pts]) => out += polyline(pts, color, fx, fy));
    const unitWidth = c.unit.length > 4 ? 40 : 31;
    out += `<rect x="${w - AXIS + 0.5}" y="${h - 14.5}" width="${unitWidth}" height="20" fill="none" stroke="${RED}"/>`;
    out += label(w - AXIS + 2, h - 7, c.unit, UP);
    return out + (last ? frame(w, h) : '');
}

// thick border round the axis of the selected pane
function frame(w, h) {
    return `<rect x="${w - AXIS + 1}" y="1" width="${AXIS - 2}" height="${h - 2}" fill="none" stroke="${RED}" stroke-width="2"/>`;
}

function drawKdj(c, w, h) {
    const fx = scaleX(c, w);
    const fy = v => Math.round(v / 3) - 216;
    let out = axis(w, h, c.kdjGrid, fy);
    c.kdjLines.forEach(([color, pts]) => out += polyline(pts, color, fx, fy));
    return out + frame(w, h);
}

function drawFunds(c, w, h) {
    const fx = scaleX(c, w);
    const fy = v => Math.round(v / 3) - 112;
    let out = axis(w, h, { '90.00': 433, '60.00': 508, '30.00': 583 }, fy);
    [['#ff0', 394], ['#f00', 457], ['#f0f', 496], ['#0ff', 532], ['#808000', 640]].forEach(([color, v]) =>
        out += line(fx(0), fy(v) + 0.5, fx(49), fy(v) + 0.5, color));
    out += label(0, fy(622), '用到未来数据', '#808080');
    trend.forEach(([color, pts]) => out += polyline(pts, color, fx, fy, 2));
    trendCount.forEach(([i, y], n) => out += label(fx(i), fy(y), n + 1, n === 8 ? '#00e600' : '#ff8080', 'middle'));
    trendMarks.forEach(([i, y, text, color]) => {
        out += `<path transform="translate(${fx(i)} ${fy(y)})" d="M0-6L1.6-2H6L2.5 1 4 6 0 3-4 6-2.5 1-6-2H-1.6Z" fill="${color}"/>`;
        out += label(fx(i) + 6, fy(y), text, color);
    });
    return out;
}

function drawTimes(c, w, h) {
    const fx = scaleX(c, w);
    let out = line(w - AXIS + 0.5, 0, w - AXIS + 0.5, h, RED);
    c.times.forEach(([i, text]) => {
        if (i) out += line(fx(i), 0, fx(i), h, RED);
        out += label(fx(i) + 1, 8, text, UP);
    });
    c.timeTicks.forEach(i => out += line(fx(i), 0, fx(i), 2, RED));
    return out + label(w - AXIS / 2, 8, c.period, '#c0c0c0', 'middle');
}

function drawIntraday(w) {
    const left = 57, right = w - 51, width = right - left;
    let out = '';
    const levels = [[20, '3778', '4.74%'], [36, '3744', '3.79%'], [53, '3710', '2.84%'], [70, '3675', '1.90%'], [87, '3641', '0.95%'], [104, '3607', '0.00%'], [120, '3573', '0.95%'], [137, '3539', '1.90%'], [154, '3505', '2.84%'], [171, '3470', '3.79%'], [188, '338.3万', '338.3万'], [209, '253.7万', '253.7万'], [230, '169.1万', '169.1万'], [251, '845636', '845636']];
    levels.forEach(([y, l, r], n) => {
        const color = n < 5 ? UP : n === 5 ? '#fff' : n < 10 ? '#00e600' : '#c0c000';
        const thick = n === 5 || n === 10;
        out += line(left, y + (thick ? 1 : 0.5), right, y + (thick ? 1 : 0.5), RED, thick ? 'stroke-width="2"' : '');
        out += label(left - 4, y + 1, l, color, 'end') + label(right + 3, y + 1, r, color);
    });
    for (let n = 1; n < 8; n++) {
        const x = Math.round(left + width * n / 8) + 0.5;
        out += line(x, 20, x, 272, RED, n === 4 ? '' : dotted);
    }
    out += line(left + 0.5, 20, left + 0.5, 272, RED) + line(right + 0.5, 0, right + 0.5, 290, RED);
    out += line(0, 272.5, w, 272.5, RED);

    const at = i => Math.round(left + 3 + i * (width - 6) / (breadth.length - 1)) + 0.5;
    breadth.forEach((v, i) => {
        out += v > 0 ? line(at(i), 104 - v, at(i), 104, UP) : line(at(i), 105, at(i), 105 - v, '#00e600');
        const near = (c, r) => Math.max(0, 1 - Math.abs(i - c) / r);
        const vol = i ? 5 + 15 * Math.exp(-i / 24) + 6 * near(30, 6) + 4 * near(53, 9) + 3 * near(70, 4) + 4 * near(121, 2) + 3 * near(232, 25) + i * 7 % 3 / 2 : 41;
        out += line(at(i), 272 - Math.round(vol), at(i), 272, '#c0c000');
    });
    out += line(right + 0.5, 195, right + 0.5, 272, '#c0c000');
    const fx = x => Math.round(left + width * x / 1000) + 0.5;
    out += polyline(indexLine, '#fff', fx, y => y) + polyline(leadLine, '#ff0', fx, y => y);
    [[0, '09:30', -32], [0.25, '10:30', -32], [0.5, '13:00', -28], [0.75, '14:00', -31], [1, '15:00', -32]].forEach(([p, t, shift]) =>
        out += label(left + width * p + shift, 281, t, UP));
    return out;
}

const paneReadout = {
    volume: c => `<span class="white">VOLUME: ${c.volume[0]}</span><span class="white">MA5: ${c.volume[1]}</span><span class="yellow">MA10: ${c.volume[2]}</span>`,
    kdj: c => `<span>KDJ(9,3,3)</span><span class="white">K: ${c.kdj[0]}</span><span class="yellow">D: ${c.kdj[1]}</span><span class="magenta">J: ${c.kdj[2]}</span>`,
    funds: () => '<span>主力资金</span><span class="fire">爆发线: 80.00</span><span class="magenta">即将爆发线: 65.00</span><span class="cyan">警戒线: 50.00</span><span class="olive">抄底线: 7.50</span><span class="white">趋势线: 71.48</span>'
};

function buildColumn(c) {
    const panes = c.panes.map((p, n) => `<div class="panel"><svg class="plot" data-kind="${p}" data-last="${n === 2 ? 1 : ''}"></svg><div class="readout">${toggle()}${paneReadout[p](c)}</div></div>`).join('');
    const keys = ['指标', '窗口', 'MACD', 'DMI', 'DMA', 'FSL', 'TRIX', 'BRAR', 'CR', 'VR', 'OBV', 'ASI', 'EMV', '&gt;'];
    $(c.id).innerHTML = `
        <div class="panel price"><svg class="plot" data-kind="price"></svg><div class="readout"><span>${c.name}</span>${toggle()}
            <span class="white">MA5: ${c.ma[0]}</span><span class="yellow">MA10: ${c.ma[1]}</span><span class="magenta">MA20: ${c.ma[2]}</span><span class="lime">MA60: ${c.ma[3]}</span></div></div>
        ${panes}
        <div class="panel times"><svg class="plot" data-kind="times"></svg></div>
        <div class="indicators">${keys.map(k => `<button>${k}</button>`).join('')}<span class="rest"></span><button>模板</button><button class="key">+</button><button class="key">-</button><button class="key">Z</button></div>
        <nav class="sheet-tabs"><div class="tab-list">${tabButtons(c.tabs, c.tabs[c.tabs.length - 1])}</div></nav>`;
}

const draw = { price: drawPrice, volume: drawVolume, kdj: drawKdj, funds: drawFunds, times: drawTimes };

function render() {
    columns.forEach(c => {
        $(c.id).querySelectorAll('svg.plot').forEach(svg => {
            const { width, height } = svg.getBoundingClientRect();
            svg.innerHTML = draw[svg.dataset.kind](c, Math.round(width), Math.round(height), svg.dataset.last);
        });
    });
    $('intraday').innerHTML = drawIntraday(Math.round($('intraday').getBoundingClientRect().width));
}

$('menu').innerHTML = menu.map(m => `<a href="#"${m === '行业' ? ' class="spaced"' : ''}>${m}</a>`).join('');
$('menuRight').innerHTML = menuRight.map(m => `<a href="#">${m}</a>`).join('');
$('pageTabs').innerHTML = tabButtons(pageTabs, '多大周期');
$('stockTabs').innerHTML = tabButtons(stockTabs, '短线宝');

$('fundsBody').innerHTML += funds.map(([name, price, rise, money]) =>
    `<tr><td><a href="#">${name}</a></td><td>${price}</td><td class="rise">${rise}</td><td>${money}</td></tr>`).join('');

$('stockBody').innerHTML = stocks.map(([code, name, tag, mark, pct, price, diff, bid, note], i) => {
    const tone = pct[0] === '-' ? 'green' : 'red';
    return `<tr${i ? '' : ' class="picked"'}><td class="no">${i + 1}</td><td>${code}</td>
        <td class="name">${name}<span class="tag">${tag}</span><span class="mark">${mark}</span></td>
        ${[pct, price, diff, bid].map(v => `<td class="num ${tone}">${v}</td>`).join('')}
        <td class="note">${note}</td><td></td></tr>`;
}).join('');

$('facts').innerHTML = facts.map(([k, v, tone]) => `<tr><td><em>${k}</em></td><td class="${tone}">${v}</td></tr>`).join('');
const spreadRows = (rows, tone) => rows.map(([k, w, v]) => `<tr><td>${k}</td><td class="bar"><i style="width:${w}px"></i></td><td class="${tone}">${v}</td></tr>`).join('');
$('spreadUp').innerHTML = spreadRows(spreadUp, 'red');
$('spreadDown').innerHTML = spreadRows(spreadDown, 'green');
$('ticks').innerHTML = ticks.map(([t, p, v]) => `<tr><td>${t}</td><td class="red">${p}</td><td class="gold">${v.slice(0, -1)}<em>${v.slice(-1)}</em></td></tr>`).join('');

$('watermarks').innerHTML = '<span>www.cfchi.com</span>'.repeat(40);

columns.forEach(buildColumn);
render();
window.addEventListener('resize', render);
```
